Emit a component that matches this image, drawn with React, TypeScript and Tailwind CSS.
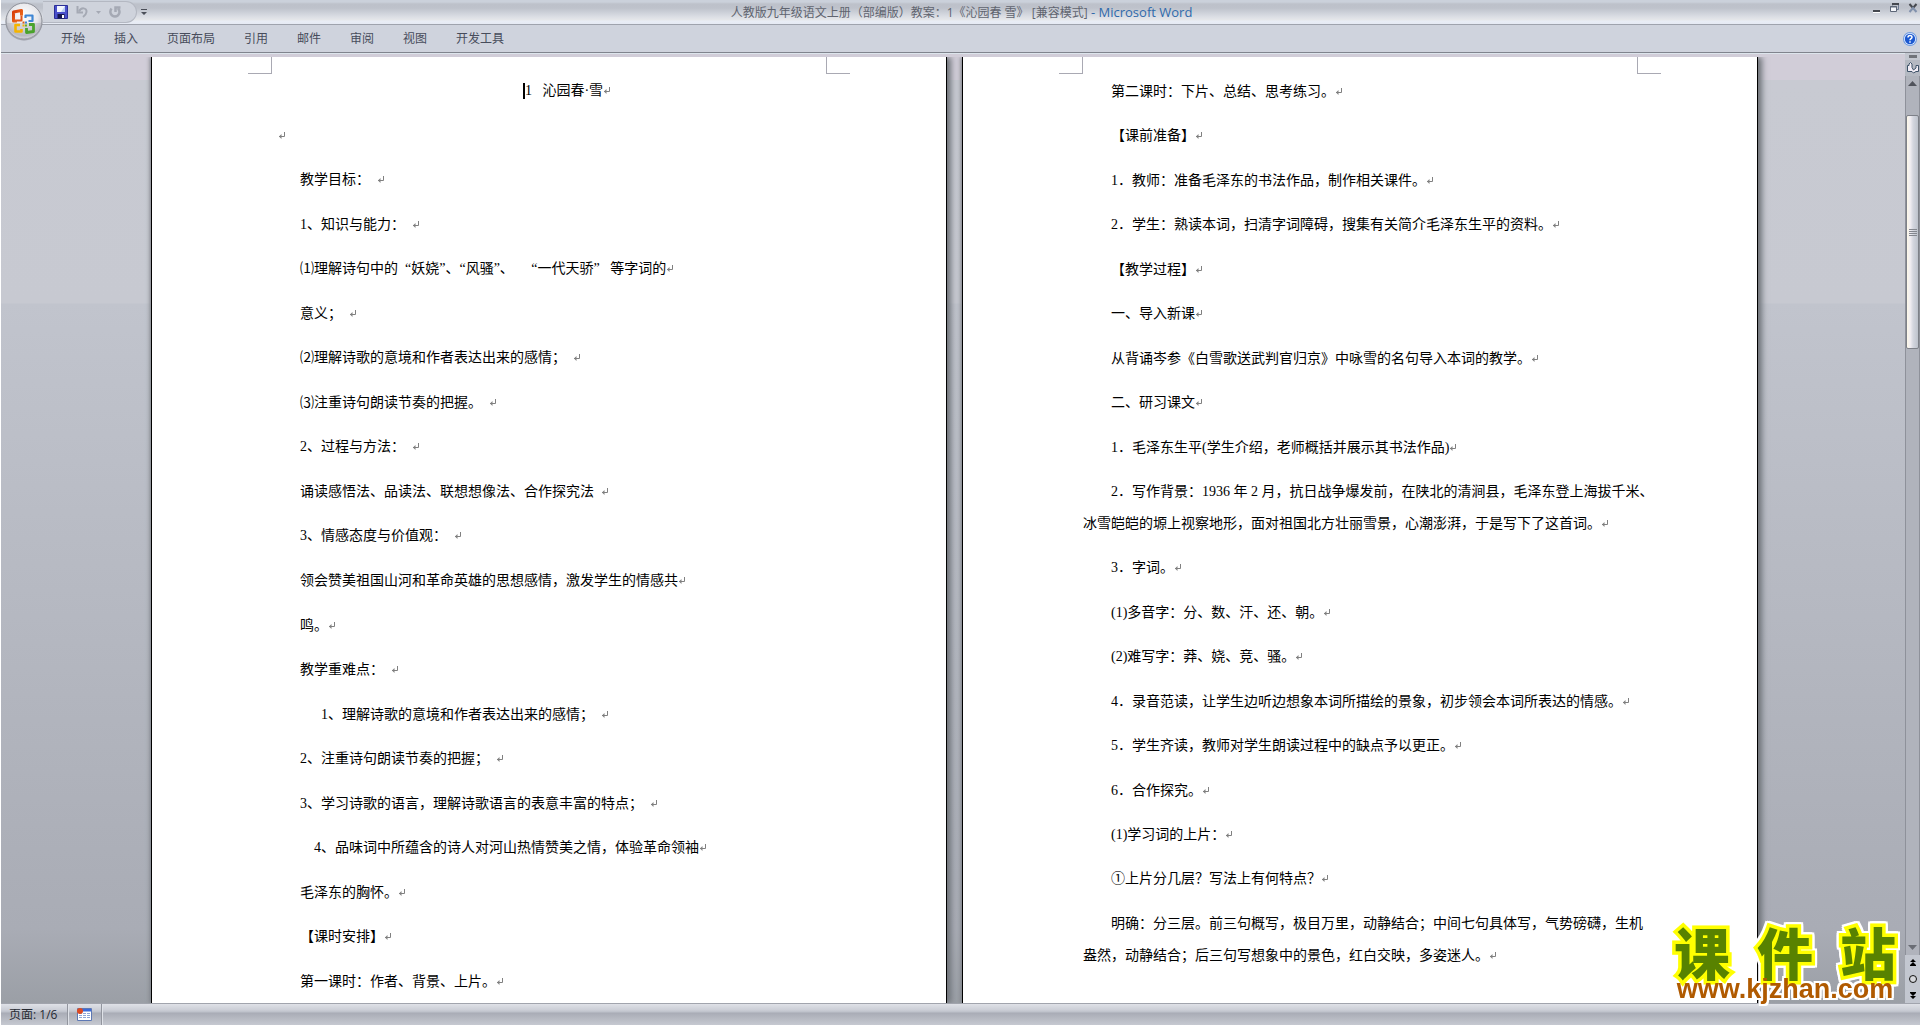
import React from "react";

const tabs = ["开始", "插入", "页面布局", "引用", "邮件", "审阅", "视图", "开发工具"];

type Para = { lines: string[] };

const S = "\u00a0";
const S2 = S + S;

const leftPage: string[] = [
  `教学目标：${S2}`,
  `1、知识与能力：${S2}`,
  `⑴理解诗句中的${S2}“妖娆”、“风骚”、　${S2}${S}“一代天骄”${S2}${S}等字词的`,
  `意义；${S2}`,
  `⑵理解诗歌的意境和作者表达出来的感情；${S2}`,
  `⑶注重诗句朗读节奏的把握。${S2}`,
  `2、过程与方法：${S2}`,
  `诵读感悟法、品读法、联想想像法、合作探究法${S2}`,
  `3、情感态度与价值观：${S2}`,
  `领会赞美祖国山河和革命英雄的思想感情，激发学生的情感共`,
  `鸣。`,
  `教学重难点：${S2}`,
  `${S2}${S2}${S2}1、理解诗歌的意境和作者表达出来的感情；${S2}`,
  `2、注重诗句朗读节奏的把握；${S2}`,
  `3、学习诗歌的语言，理解诗歌语言的表意丰富的特点；${S2}`,
  `${S2}${S2}4、品味词中所蕴含的诗人对河山热情赞美之情，体验革命领袖`,
  `毛泽东的胸怀。`,
  `【课时安排】`,
  `第一课时：作者、背景、上片。`,
];

const rightPage: Para[] = [
  { lines: ["第二课时：下片、总结、思考练习。"] },
  { lines: ["【课前准备】"] },
  { lines: ["1．教师：准备毛泽东的书法作品，制作相关课件。"] },
  { lines: ["2．学生：熟读本词，扫清字词障碍，搜集有关简介毛泽东生平的资料。"] },
  { lines: ["【教学过程】"] },
  { lines: ["一、导入新课"] },
  { lines: ["从背诵岑参《白雪歌送武判官归京》中咏雪的名句导入本词的教学。"] },
  { lines: ["二、研习课文"] },
  { lines: ["1．毛泽东生平(学生介绍，老师概括并展示其书法作品)"] },
  {
    lines: [
      "2．写作背景：1936 年 2 月，抗日战争爆发前，在陕北的清涧县，毛泽东登上海拔千米、",
      "冰雪皑皑的塬上视察地形，面对祖国北方壮丽雪景，心潮澎湃，于是写下了这首词。",
    ],
  },
  { lines: ["3．字词。"] },
  { lines: ["(1)多音字：分、数、汗、还、朝。"] },
  { lines: ["(2)难写字：莽、娆、竞、骚。"] },
  { lines: ["4．录音范读，让学生边听边想象本词所描绘的景象，初步领会本词所表达的情感。"] },
  { lines: ["5．学生齐读，教师对学生朗读过程中的缺点予以更正。"] },
  { lines: ["6．合作探究。"] },
  { lines: ["(1)学习词的上片："] },
  { lines: ["①上片分几层？写法上有何特点？"] },
  {
    lines: [
      "明确：分三层。前三句概写，极目万里，动静结合；中间七句具体写，气势磅礴，生机",
      "盎然，动静结合；后三句写想象中的景色，红白交映，多姿迷人。",
    ],
  },
];

function ReturnMark() {
  return (
    <svg className="inline-block align-baseline" width="8" height="8" viewBox="0 0 8 8" fill="none" stroke="#808080" aria-hidden="true">
      <path d="M6.500 0v4.500H1" />
      <path d="M3.500 2v5L1 4.500z" fill="#808080" stroke="none" />
    </svg>
  );
}

function CornerMarks() {
  return (
    <div className="absolute inset-x-0 top-0 flex justify-between px-24" aria-hidden="true">
      <span className="h-[17px] w-6 border-r border-b border-[#a9a9b3]" />
      <span className="h-[17px] w-6 border-l border-b border-[#a9a9b3]" />
    </div>
  );
}

function Page({ children, className }: { children: React.ReactNode; className: string }) {
  return (
    <article
      className={
        "relative flex w-[796px] shrink-0 flex-col border-x border-black bg-white px-[120px] text-[14px] leading-8 whitespace-nowrap text-black shadow-[4px_0_6px_#6f7379,-1px_0_4px_#7c8087] [font-family:'Liberation_Serif','Noto_Sans_CJK_SC',serif] " +
        className
      }
    >
      <CornerMarks />
      {children}
    </article>
  );
}

function OfficeOrb() {
  return (
    <svg width="40" height="40" viewBox="0 0 40 40" aria-hidden="true">
      <defs>
        <radialGradient id="orb" cx="0.5" cy="0.35" r="0.65">
          <stop offset="0" stopColor="#ffffff" />
          <stop offset="0.6" stopColor="#e6e6ea" />
          <stop offset="0.85" stopColor="#c3c4cb" />
          <stop offset="1" stopColor="#f4f4f6" />
        </radialGradient>
        <linearGradient id="orbR" x1="0" y1="0" x2="1" y2="1">
          <stop offset="0" stopColor="#d63c0a" />
          <stop offset="1" stopColor="#f4741f" />
        </linearGradient>
      </defs>
      <circle cx="20" cy="21" r="18.500" fill="#7f828b" opacity="0.6" />
      <circle cx="20" cy="20" r="18" fill="url(#orb)" stroke="#8d9099" />
      <path d="M2.500 22h35a17.500 17.500 0 0 1-35 0z" fill="#a9abb4" opacity="0.4" />
      <g fill="none" strokeLinejoin="round">
        <path d="M13 20H9.500V11l8-1.500v5" stroke="url(#orbR)" strokeWidth="3" />
        <path d="M17.500 14.500v5H13" stroke="#e2561a" strokeWidth="2" />
        <path d="M21.500 17v-2.500h7v5.500h-4" stroke="#3f86d4" strokeWidth="2.200" />
        <path d="M16 24h-4.500v6.500h6V28" stroke="#f5b400" strokeWidth="2.600" />
        <path d="M22.500 27v4.500l7-1V23.500h-4.500" stroke="#4aa32c" strokeWidth="2.800" />
      </g>
      <path d="M18.500 20.500h2v2h-2z" fill="#d85a1a" />
      <path d="M21 20.500h2v2h-2z" fill="#3f86d4" />
      <path d="M18.500 23.500h2v2h-2z" fill="#f5b400" />
      <path d="M21 23.500h2v2h-2z" fill="#6aae2c" />
    </svg>
  );
}

function TitleBar() {
  return (
    <div className="flex h-[25px] items-center border-b border-[#9fa3ad] bg-[linear-gradient(#cbd1db_0,#cbd1db_2px,#bdc1ca_4px,#bec2cb_8px,#ced2da_13px,#dcdfe5_17px,#e6e7ea_20px,#e9edf5_21px,#e6eaf4_24px)]">
      <div className="flex h-full flex-1 items-center">
        <div className="ml-[42px] flex h-[22px] w-[94px] items-center gap-2 rounded-r-full border border-l-0 border-[#b4b8c2] bg-[#cfd3dc] pl-[11px]">
          <button aria-label="保存">
            <svg width="14" height="14" viewBox="0 0 14 14">
              <path d="M.5 .5h13v13H.5z" fill="#4a50cc" stroke="#2b2e96" />
              <path d="M3 1h8v6H3z" fill="#f2f5ff" />
              <path d="M7 7L11 1v6z" fill="#b8cdf2" />
              <path d="M3.500 9h7v4.500h-7z" fill="#15164f" />
              <path d="M8 10h2v3H8z" fill="#fff" />
            </svg>
          </button>
          <button aria-label="撤消">
            <svg width="12" height="12" viewBox="0 0 12 12" fill="none" stroke="#a5a9b4" strokeWidth="2">
              <path d="M3 5.500C5 1 11 1.500 10.500 6c-.2 2-1.500 3.500-3.500 5" />
              <path d="M1.500 0v6.500H7" />
            </svg>
          </button>
          <svg width="5" height="3" viewBox="0 0 5 3" aria-hidden="true">
            <path d="M0 0h5L2.500 3z" fill="#a5a9b4" />
          </svg>
          <button aria-label="重复">
            <svg width="12" height="12" viewBox="0 0 12 12" fill="none" stroke="#a5a9b4" strokeWidth="2.500">
              <path d="M2.500 2.500C0 6 2 10.500 6 10.500s6-5 3-8" />
              <path d="M6.500 6V1.500h5" />
            </svg>
          </button>
        </div>
        <button aria-label="自定义快速访问工具栏" className="ml-1">
          <svg width="6" height="6" viewBox="0 0 6 6" fill="#4b4f59">
            <path d="M0 0h6v1H0zM0 3h6L3 6z" />
          </svg>
        </button>
      </div>
      <h1 className="pl-1 text-[12px] leading-6 whitespace-pre text-[#60646f]">
        人教版九年级语文上册（部编版）教案：1《沁园春 雪》 [兼容模式]
        <span className="text-[13px] text-[#2f6aab]"> - Microsoft Word</span>
      </h1>
      <div className="flex h-full flex-1 items-start justify-end gap-[8px] pt-[3px] pr-[2px]">
        <button aria-label="最小化">
          <svg width="9" height="10" viewBox="0 0 9 10">
            <path d="M1 7h7v2H1z" fill="#45484f" />
            <path d="M1 9h7v1H1z" fill="#fff" />
          </svg>
        </button>
        <button aria-label="还原">
          <svg width="11" height="10" viewBox="0 0 11 10" fill="none">
            <path d="M3.500 2.500v-2h6v6h-2" stroke="#6d7a92" />
            <path d="M3 1h7" stroke="#45484f" strokeWidth="2" />
            <path d="M1.500 3.500h6v5h-6z" fill="#f4f6fa" stroke="#5d6677" />
            <path d="M1 4h7" stroke="#5d6677" />
          </svg>
        </button>
        <button aria-label="关闭">
          <svg width="10" height="10" viewBox="0 0 10 10" fill="none" strokeWidth="2">
            <path d="M1.500 1L5 5l3.500-4" stroke="#45484f" />
            <path d="M1.500 9L5 5l3.500 4" stroke="#8191ac" />
          </svg>
        </button>
      </div>
    </div>
  );
}

function Ribbon() {
  return (
    <nav className="flex h-[28px] items-center border-b border-[#80848d] bg-[#cfd3dd] pl-[60px] text-[12px] text-[#474c5b]">
      <div className="flex flex-1 gap-[29px]">
        {tabs.map((t) => (
          <button key={t}>{t}</button>
        ))}
      </div>
      <button aria-label="帮助" className="pr-[3px]">
        <svg width="14" height="14" viewBox="0 0 14 14">
          <circle cx="7" cy="7" r="7" fill="#6f9ae0" />
          <circle cx="7" cy="7" r="6" fill="#e6f0ff" />
          <circle cx="7" cy="7" r="5.200" fill="#1c58d0" />
          <path d="M5 5.500c0-2.500 4-2.500 4-.3C9 6.700 7 6.500 7 8.300M7 9.300v1.400" stroke="#fff" strokeWidth="1.500" fill="none" />
        </svg>
      </button>
    </nav>
  );
}

function ScrollBar() {
  return (
    <div className="flex w-[15px] shrink-0 flex-col bg-[#c3c7d0]">
      <div className="flex h-[7px] items-center justify-center">
        <span className="h-[3px] w-2 bg-[#70737a]" />
      </div>
      <button aria-label="标尺" className="flex h-4 items-center justify-center bg-[#b5b9c2]">
        <svg width="12" height="12" viewBox="0 0 12 12" fill="#f3eef6" stroke="#3e5268">
          <path d="M.5 3.500v6H5l1.500 1.500L9 9.500h2.500v-6H9V6L6.500 8 5 5.500V2L3.500 .5 2 2v1.500z" />
        </svg>
      </button>
      <div className="flex flex-1 flex-col items-center border-x border-[#8e919a] bg-[#b0b3bc]">
        <button aria-label="向上滚动" className="flex h-[39px] items-start pt-[5px]">
          <svg width="9" height="5" viewBox="0 0 9 5">
            <path d="M0 5h9L4.500 0z" fill="#50535b" />
          </svg>
        </button>
        <div className="flex h-[234px] w-full flex-col items-center justify-center gap-[1px] rounded-xs border border-[#7d8088] bg-[linear-gradient(90deg,#fdf8e8,#f0edf2_30%,#d4d6df_55%,#bdc2cc)]">
          <span className="h-px w-2 bg-[#83868e]" />
          <span className="h-px w-2 bg-[#83868e]" />
          <span className="h-px w-2 bg-[#83868e]" />
          <span className="h-px w-2 bg-[#83868e]" />
        </div>
        <div className="flex-1" />
        <button aria-label="向下滚动" className="flex h-[15px] items-center">
          <svg width="9" height="5" viewBox="0 0 9 5">
            <path d="M0 0h9L4.500 5z" fill="#6a6d75" />
          </svg>
        </button>
      </div>
      <div className="flex h-12 flex-col items-center justify-around">
        <button aria-label="前一页">
          <svg width="6" height="7" viewBox="0 0 6 7">
            <path d="M0 3l3-3 3 3zM0 6l3-3 3 3zM0 6h6v1H0z" />
          </svg>
        </button>
        <button aria-label="选择浏览对象">
          <svg width="8" height="8" viewBox="0 0 8 8">
            <circle cx="4" cy="4" r="3.500" fill="#d5d7dc" stroke="#111" />
          </svg>
        </button>
        <button aria-label="下一页">
          <svg width="6" height="7" viewBox="0 0 6 7">
            <path d="M0 0h6v1H0zM0 1l3 3 3-3zM0 4l3 3 3-3z" />
          </svg>
        </button>
      </div>
    </div>
  );
}

function StatusBar() {
  return (
    <footer className="flex h-[22px] items-stretch border-t border-[#a1a4ad] bg-[linear-gradient(#dfe1e7,#cbced6_6px,#bdc1ca_8px,#a9acb6_9px,#b5b8c1_14px,#c6c9d1)] text-[12px] text-[#262a33]">
      <button className="flex w-[67px] items-center border-r border-[#92959e] pl-2 shadow-[1px_0_0_#dfe2e8]">页面: 1/6</button>
      <button aria-label="宏录制" className="flex w-[34px] items-center justify-center border-r border-[#92959e] shadow-[1px_0_0_#dfe2e8]">
        <svg width="15" height="13" viewBox="0 0 15 13">
          <path d="M.5 .5h14v12H.5z" fill="#fff" stroke="#5d78b4" />
          <path d="M1 1h13v2.500H1z" fill="#3c6ad8" />
          <path d="M2 5.500h11M2 7.500h11M2 9.500h11" stroke="#8fa6d6" strokeDasharray="3 1" />
          <circle cx="3" cy="3" r="3" fill="#dd4a22" />
        </svg>
      </button>
    </footer>
  );
}

function Watermark() {
  return (
    <a
      href="#"
      className="absolute right-5 bottom-6 flex w-[230px] flex-col items-center filter-[drop-shadow(2px_0_0_#fff)_drop-shadow(-2px_0_0_#fff)_drop-shadow(0_2px_0_#fff)_drop-shadow(0_-2px_0_#fff)]"
    >
      <span className="flex w-full justify-between px-1 text-[56px] leading-[42px] font-black text-[#588200] [font-family:'Liberation_Sans','Noto_Sans_CJK_SC',sans-serif] [paint-order:stroke_fill] [-webkit-text-stroke:7px_#ffff00]">
        <span>课</span>
        <span>件</span>
        <span>站</span>
      </span>
      <span className="text-[27px] leading-[24px] font-bold text-[#b05a00] [font-family:'Liberation_Sans',sans-serif]">www.kjzhan.com</span>
    </a>
  );
}

export default function App() {
  return (
    <div className="relative flex h-screen flex-col overflow-hidden border-l border-white bg-[#cfd3dd] [font-family:'Open_Sans','Noto_Sans_CJK_SC',sans-serif]">
      <header className="relative z-10">
        <TitleBar />
        <Ribbon />
        <button aria-label="Office 按钮" className="absolute top-[1px] left-[3px]">
          <OfficeOrb />
        </button>
      </header>
      <main className="flex min-h-0 flex-1">
        <div className="flex min-w-0 flex-1 flex-col">
          <div className="h-1 border-t border-[#dde5ec] bg-[#d1cdd8]" />
          <div className="flex min-h-0 flex-1 justify-center gap-[15px] overflow-hidden bg-[linear-gradient(#d1cdd8_0,#d1cdd8_23px,#c8cad2_23px,#c7c9d1_246px,#c1c4cd_247px,#a9acb5_871px,#9b9fa6_100%)] pl-[3px]">
            <Page className="justify-between pt-[18px] pb-[5px]">
              <p className="flex items-baseline justify-center pl-9 whitespace-pre">
                <span className="h-4 w-[2px] self-center bg-black" />
                <span>{`1${S2}${S}沁园春·雪`}</span>
                <ReturnMark />
              </p>
              <p className="pl-[6px]">
                <ReturnMark />
              </p>
              {leftPage.map((t, i) => (
                <p key={i} className="pl-7">
                  {t}
                  <ReturnMark />
                </p>
              ))}
            </Page>
            <Page className="justify-between pt-[19px] pb-[31px]">
              {rightPage.map((p, i) => (
                <p key={i} className="indent-7">
                  {p.lines.map((l, j) => (
                    <React.Fragment key={j}>
                      {j > 0 && <br />}
                      {l}
                    </React.Fragment>
                  ))}
                  <ReturnMark />
                </p>
              ))}
            </Page>
          </div>
        </div>
        <ScrollBar />
      </main>
      <StatusBar />
      <Watermark />
    </div>
  );
}
